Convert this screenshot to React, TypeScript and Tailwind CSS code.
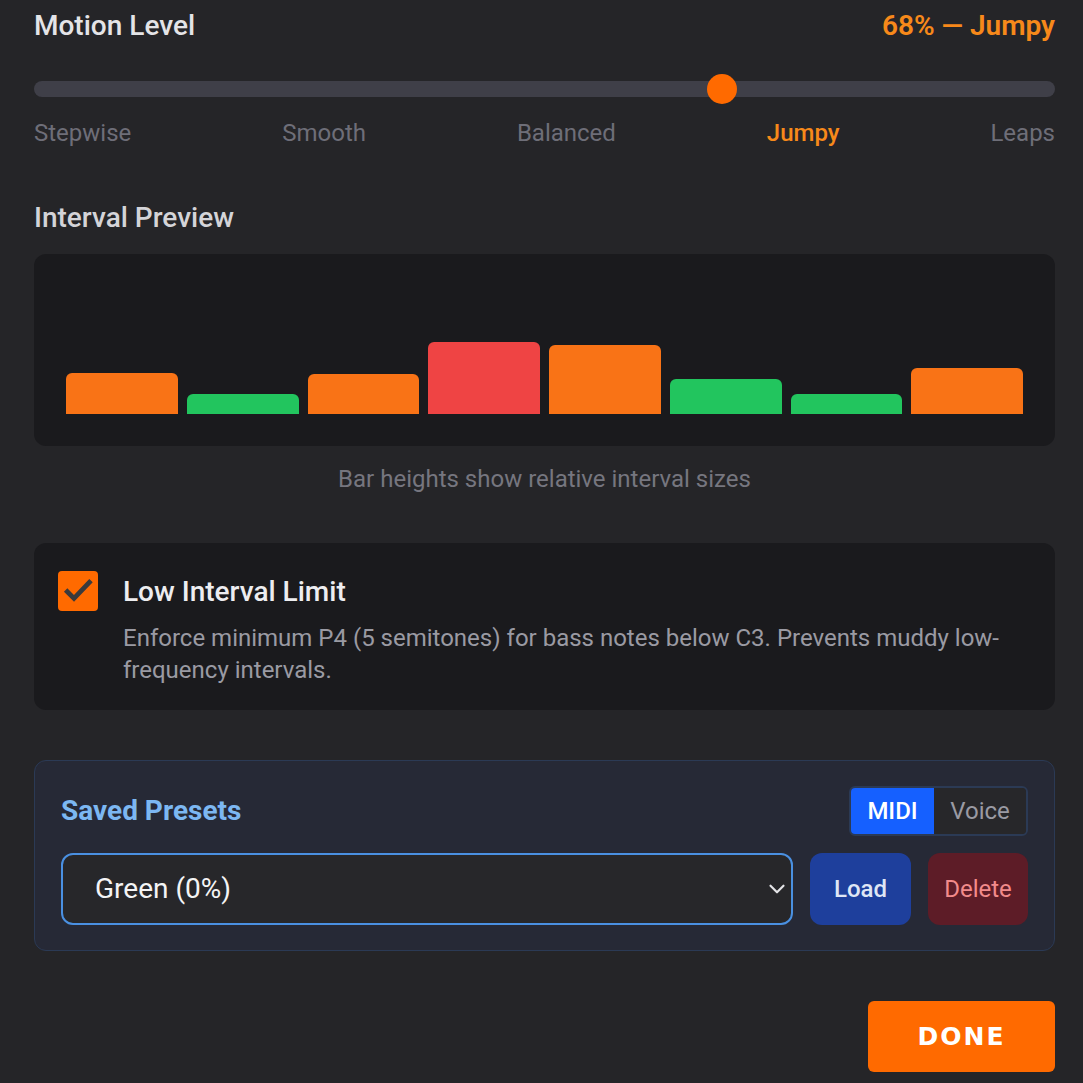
import { useState } from "react";

const bars = [
  { h: 41, c: "bg-[#f97316]" },
  { h: 20, c: "bg-[#22c55e]" },
  { h: 40, c: "bg-[#f97316]" },
  { h: 72, c: "bg-[#ef4444]" },
  { h: 69, c: "bg-[#f97316]" },
  { h: 35, c: "bg-[#22c55e]" },
  { h: 20, c: "bg-[#22c55e]" },
  { h: 46, c: "bg-[#f97316]" },
];

const levels = ["Stepwise", "Smooth", "Balanced", "Jumpy", "Leaps"];

export default function App() {
  const [motion] = useState(68);
  const [lowLimit, setLowLimit] = useState(true);
  const [mode, setMode] = useState<"midi" | "voice">("midi");

  return (
    <div
      className="min-h-screen bg-[#252528] pl-[34px] pr-[28px] pt-[10px] pb-4 text-[#e4e4e7]"
      style={{ fontFamily: "Roboto, 'Noto Sans', sans-serif" }}
    >
      {/* motion header */}
      <div className="flex items-center justify-between h-8">
        <h3 className="text-[28px] leading-8 font-medium text-[#e4e4e7]">Motion Level</h3>
        <span className="text-[28px] leading-8 font-semibold text-[#f7891a]">68% — Jumpy</span>
      </div>

      {/* slider */}
      <div className="relative mt-[31px] h-8 flex items-center">
        <div className="w-full h-4 rounded-full bg-[#3f3f48]"></div>
        <div
          className="absolute top-[1px] w-[30px] h-[30px] -ml-[15px] rounded-full bg-[#ff6a00]"
          style={{ left: `${motion - 0.6}%` }}
        ></div>
      </div>

      <div className="mt-[14px] flex justify-between text-[24px] leading-7">
        {levels.map((l) => (
          <span key={l} className={l === "Jumpy" ? "text-[#f7891a] font-medium" : "text-[#6e6e78]"}>
            {l}
          </span>
        ))}
      </div>

      {/* interval preview */}
      <h3 className="mt-[56px] text-[28px] leading-[30px] font-medium text-[#d4d4d8]">Interval Preview</h3>
      <div className="mt-[21px] h-[192px] rounded-xl bg-[#1a1a1d] px-8 pb-8 flex items-end gap-[9px]">
        {bars.map((b, i) => (
          <div key={i} className={`flex-1 rounded-t-md ${b.c}`} style={{ height: b.h }}></div>
        ))}
      </div>
      <p className="mt-[19px] text-center text-[24px] leading-7 text-[#76767f]">
        Bar heights show relative interval sizes
      </p>

      {/* low interval limit */}
      <div className="mt-[50px] rounded-xl bg-[#1a1a1d] pl-6 pr-6 pt-[28px] pb-6 flex gap-[25px]">
        <button
          onClick={() => setLowLimit(!lowLimit)}
          className="w-10 h-10 shrink-0 rounded-[4px] bg-[#ff6a00] flex items-center justify-center"
        >
          {lowLimit && (
            <svg viewBox="0 0 24 24" className="w-[32px] h-[32px]" fill="none" stroke="#3a3a3c" strokeWidth="3.6" strokeLinecap="square">
              <path d="M4 12.5l5 5L20.5 5.5" />
            </svg>
          )}
        </button>
        <div className="pt-[5px]">
          <h4 className="text-[28px] leading-8 font-medium text-[#ededf0]">Low Interval Limit</h4>
          <p className="mt-[14px] text-[24px] leading-8 text-[#9a9aa3]">
            Enforce minimum P4 (5 semitones) for bass notes below C3. Prevents muddy low-frequency intervals.
          </p>
        </div>
      </div>

      {/* saved presets */}
      <div className="mt-[50px] rounded-xl border border-[#2b3a55] bg-[#262936] px-[26px] pt-[25px] pb-[25px]">
        <div className="flex items-center justify-between h-[49px]">
          <h3 className="text-[28px] font-bold text-[#7cb7f2]">Saved Presets</h3>
          <div className="flex h-[50px] rounded-md border-2 border-[#2b3a55] overflow-hidden text-[24px]">
            <button
              onClick={() => setMode("midi")}
              className={`w-[83px] font-medium ${mode === "midi" ? "bg-[#1560ff] text-white" : "bg-[#27272a] text-[#9a9aa3]"}`}
            >
              MIDI
            </button>
            <button
              onClick={() => setMode("voice")}
              className={`w-[92px] ${mode === "voice" ? "bg-[#1560ff] text-white" : "bg-[#27272a] text-[#9a9aa3]"}`}
            >
              Voice
            </button>
          </div>
        </div>
        <div className="mt-[18px] flex gap-[17px] h-[72px]">
          <div className="flex-1 rounded-xl border-2 border-[#4a90e2] bg-[#27272a] pl-[32px] pr-[1px] flex items-center justify-between">
            <span className="text-[28px] text-[#f4f4f5]">Green (0%)</span>
            <svg viewBox="0 0 24 24" className="w-[26px] h-[26px]" fill="none" stroke="#e4e4e7" strokeWidth="2" strokeLinecap="round" strokeLinejoin="round">
              <path d="M6 9l6 6 6-6" />
            </svg>
          </div>
          <button className="w-[101px] rounded-xl bg-[#1e3f9c] text-[24px] font-medium text-[#dfe6f5]">Load</button>
          <button className="w-[100px] rounded-xl bg-[#5d1c27] text-[24px] text-[#f28b8b]">Delete</button>
        </div>
      </div>

      {/* done */}
      <div className="mt-[50px] flex justify-end">
        <button
          className="w-[187px] h-[71px] rounded-md bg-[#ff6a00] text-white text-[25px] font-bold tracking-[2px]"
          style={{ fontFamily: "'DejaVu Sans', sans-serif" }}
        >
          DONE
        </button>
      </div>
    </div>
  );
}
